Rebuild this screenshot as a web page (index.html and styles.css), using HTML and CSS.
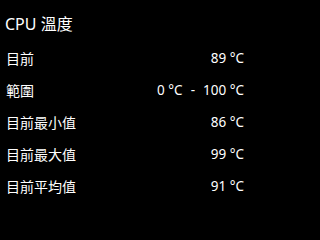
FILE: index.html
```html
<!DOCTYPE html>
<html lang="zh-Hant">
<head>
<meta charset="utf-8">
<link rel="stylesheet" href="styles.css">
</head>
<body>
<div class="panel">
  <div class="title">CPU 溫度</div>
  <div class="row"><span class="label">目前</span><span class="value">89 °C</span></div>
  <div class="row"><span class="label">範圍</span><span class="value">0 °C<span class="dash">-</span>100 °C</span></div>
  <div class="row"><span class="label">目前最小值</span><span class="value">86 °C</span></div>
  <div class="row"><span class="label">目前最大值</span><span class="value">99 °C</span></div>
  <div class="row"><span class="label">目前平均值</span><span class="value">91 °C</span></div>
</div>
</body>
</html>
```
FILE: styles.css
```css
html, body {
  margin: 0;
  padding: 0;
  background: #000;
}
.panel {
  width: 252px;
  height: 204px;
  box-sizing: border-box;
  padding: 0 8px 0 6px;
  color: #fff;
  font-family: "Noto Sans", "Noto Sans CJK TC", sans-serif;
  display: flex;
  flex-direction: column;
}
.title {
  height: 38px;
  padding-top: 4px;
  display: flex;
  align-items: center;
  font-size: 16px;
  margin-left: -1px;
}
.row {
  height: 32px;
  display: flex;
  align-items: center;
  justify-content: space-between;
  font-size: 14px;
}
.value {
  font-size: 13.5px;
}
.dash {
  margin: 0 8px;
}
```
